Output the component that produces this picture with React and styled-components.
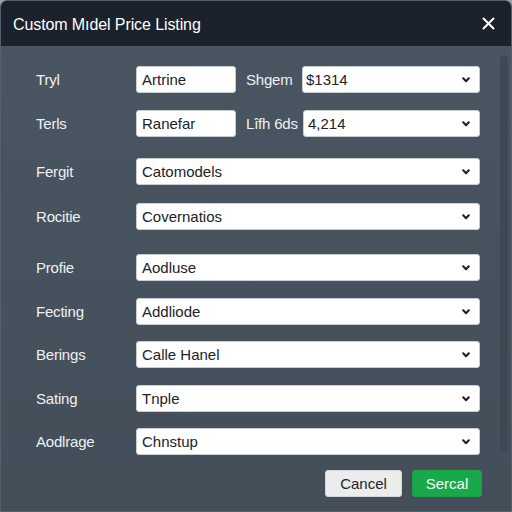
import React from 'react'
import styled, {createGlobalStyle} from 'styled-components'

const Global = createGlobalStyle`
html, body {
margin: 0;
padding: 0;
background: #9aa0a6;
}
body {
font-family: "Liberation Sans", Arial, sans-serif;
}
`

const Dialog = styled.div`
width: 512px;
height: 512px;
box-sizing: border-box;
display: flex;
flex-direction: column;
border-radius: 7px 7px 0 0;
overflow: hidden;
background: linear-gradient(180deg, #4a5661 0%, #46525d 50%, #434e59 100%);
border: 1px solid #56606b;
`

const Header = styled.div`
height: 45px;
flex-shrink: 0;
display: flex;
align-items: center;
justify-content: space-between;
padding: 0 16px 0 12px;
background: #1b222b;
color: #fff;
`

const Title = styled.div`
font-size: 16px;
letter-spacing: -0.1px;
margin-top: 2px;
`

const Close = styled.button`
border: none;
background: none;
padding: 0;
display: flex;
cursor: pointer;
`

const Body = styled.div`
flex: 1;
display: flex;
`

const Content = styled.div`
width: 479px;
box-sizing: border-box;
padding: 20px 0 0 35px;
display: flex;
flex-direction: column;
`

const Track = styled.div`
width: 8px;
margin: 10px 0 60px 20px;
border-radius: 4px;
background: #3d4852;
`

const Row = styled.div`
display: flex;
align-items: center;
height: 27px;
margin-top: ${p => p.$top}px;
`

const Label = styled.div`
width: ${p => p.$w}px;
flex-shrink: 0;
color: #eef1f4;
font-size: 15px;
letter-spacing: -0.2px;
`

const Input = styled.div`
width: 100px;
height: 27px;
box-sizing: border-box;
flex-shrink: 0;
display: flex;
align-items: center;
padding: 0 5px;
background: #fff;
border: 1px solid #c9ced3;
border-radius: 3px;
color: #202327;
font-size: 15px;
margin-right: 10px;
`

const Select = styled.div`
flex: 1;
height: 27px;
box-sizing: border-box;
display: flex;
align-items: center;
justify-content: space-between;
padding: 0 9px 0 ${p => p.$pad || 5}px;
background: #fff;
border: 1px solid #c9ced3;
border-radius: 3px;
color: #202327;
font-size: 15px;
`

const Footer = styled.div`
display: flex;
justify-content: flex-end;
gap: 10px;
margin-top: 15px;
margin-right: -2px;
`

const Button = styled.button`
height: 27px;
width: ${p => p.$w}px;
border-radius: 3px;
font-family: "Liberation Sans", Arial, sans-serif;
font-size: 15px;
border: 1px solid ${p => p.$primary ? '#17a045' : '#d4d6d8'};
background: ${p => p.$primary ? '#19a94b' : '#ebecec'};
color: ${p => p.$primary ? '#f4fff6' : '#23262a'};
`

const Chevron = () => (
    <svg width="8" height="6" viewBox="0 0 8 6">
        <path d="M1.2 1.3 L4 4.3 L6.8 1.3" fill="none" stroke="#1d2024" strokeWidth="2" strokeLinecap="round" strokeLinejoin="round" />
    </svg>
)

const rows = [
    {top: 21, label: 'Fergit', value: 'Catomodels'},
    {top: 18, label: 'Rocitie', value: 'Covernatios'},
    {top: 24, label: 'Profie', value: 'Aodluse'},
    {top: 17, label: 'Fecting', value: 'Addliode'},
    {top: 16, label: 'Berings', value: 'Calle Hanel'},
    {top: 17, label: 'Sating', value: 'Tnple'},
    {top: 16, label: 'Aodlrage', value: 'Chnstup'},
]

const App = () => {
    return (
        <Dialog>
            <Global />
            <Header>
                <Title>Custom Mıdel Price Listing</Title>
                <Close>
                    <svg width="13" height="13" viewBox="0 0 13 13">
                        <path d="M1.5 1.5 L11.5 11.5 M11.5 1.5 L1.5 11.5" stroke="#fff" strokeWidth="2" strokeLinecap="round" />
                    </svg>
                </Close>
            </Header>
            <Body>
                <Content>
                    <Row $top={0}>
                        <Label $w={100}>Tryl</Label>
                        <Input>Artrine</Input>
                        <Label $w={56}>Shgem</Label>
                        <Select $pad={3}>$1314<Chevron /></Select>
                    </Row>
                    <Row $top={17}>
                        <Label $w={100}>Terls</Label>
                        <Input>Ranefar</Input>
                        <Label $w={57}>Lîfh 6ds</Label>
                        <Select $pad={4}>4,214<Chevron /></Select>
                    </Row>
                    {rows.map(r => (
                        <Row key={r.label} $top={r.top}>
                            <Label $w={100}>{r.label}</Label>
                            <Select>{r.value}<Chevron /></Select>
                        </Row>
                    ))}
                    <Footer>
                        <Button $w={77}>Cancel</Button>
                        <Button $w={70} $primary>Sercal</Button>
                    </Footer>
                </Content>
                <Track />
            </Body>
        </Dialog>
    )
}

export default App
